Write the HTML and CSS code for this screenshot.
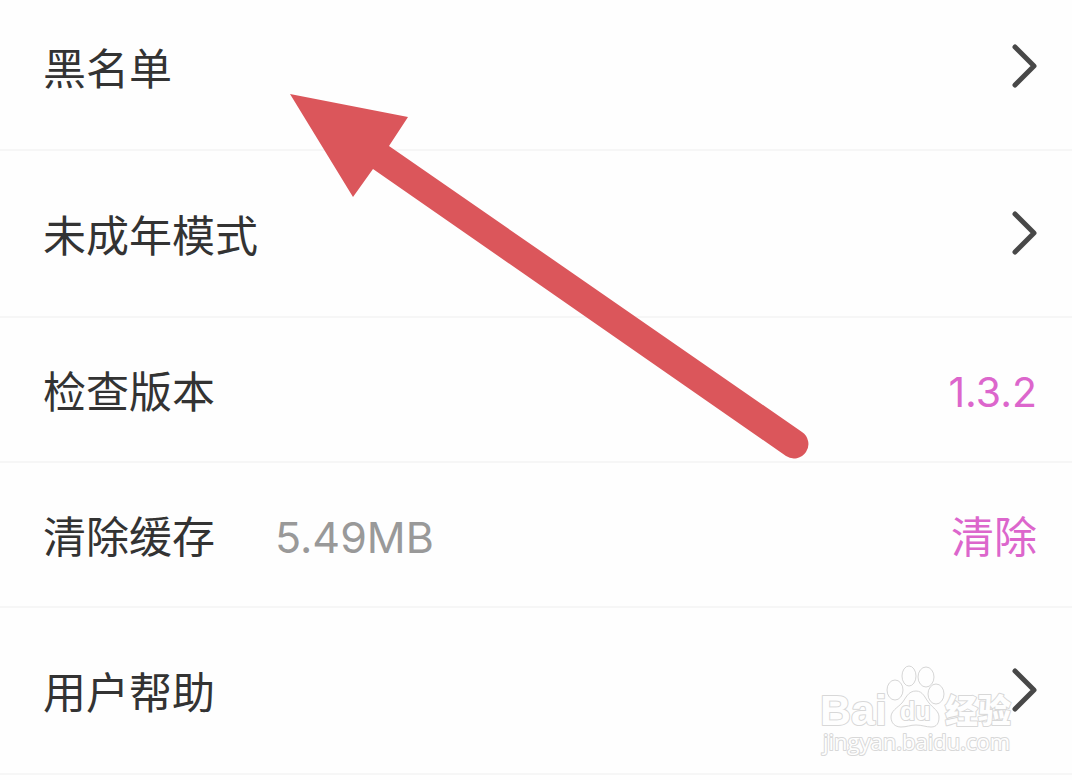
FILE: index.html
```html
<!DOCTYPE html>
<html lang="zh-CN">
<head>
<meta charset="utf-8">
<meta name="viewport" content="width=device-width, initial-scale=1">
<title>设置</title>
<link rel="stylesheet" href="styles.css">
</head>
<body>
<main class="settings">
  <a class="row row-tall" href="#blacklist">
    <span class="label">黑名单</span>
    <svg class="chevron" viewBox="0 0 26 44" aria-hidden="true"><path d="M4 3 23 22 4 41"/></svg>
  </a>
  <a class="row row-tall" href="#minor">
    <span class="label">未成年模式</span>
    <svg class="chevron" viewBox="0 0 26 44" aria-hidden="true"><path d="M4 3 23 22 4 41"/></svg>
  </a>
  <div class="row">
    <span class="label">检查版本</span>
    <span class="version">1.3.2</span>
  </div>
  <div class="row">
    <span class="label">清除缓存</span>
    <span class="size">5.49MB</span>
    <button class="clear" type="button">清除</button>
  </div>
  <div class="row row-tall">
    <svg class="watermark" viewBox="0 0 200 96" role="img" aria-label="百度经验">
      <g class="wm-shape">
        <ellipse cx="77" cy="27" rx="8" ry="10"/>
        <ellipse cx="91" cy="13" rx="7" ry="10"/>
        <ellipse cx="108" cy="14" rx="8" ry="10"/>
        <ellipse cx="118" cy="31" rx="8" ry="10"/>
        <path d="M98 28C90 28 88 35 84 40C79 45 73 48 73 54C73 60 77 64 83 64C89 64 92 62 98 62C104 62 108 64 113 64C119 64 121 60 121 54C121 48 115 45 111 40C107 35 105 28 98 28Z"/>
      </g>
      <text class="wm-text wm-brand" x="2" y="62">Bai</text>
      <text class="wm-text wm-du" x="82" y="57">du</text>
      <text class="wm-text wm-cn" x="127" y="60">经验</text>
      <text class="wm-text wm-url" x="5" y="87">jingyan.baidu.com</text>
    </svg>
    <a class="row-link" href="#help">
      <span class="label">用户帮助</span>
      <svg class="chevron" viewBox="0 0 26 44" aria-hidden="true"><path d="M4 3 23 22 4 41"/></svg>
    </a>
  </div>
  <svg class="pointer" viewBox="0 0 520 366" aria-hidden="true">
    <path d="M0 0 118 23 99 52 512 338A14 14 0 0 1 496 362L83 75 63 103Z"/>
  </svg>
</main>
</body>
</html>
```

FILE: styles.css
```css
* {
  box-sizing: border-box;
}

body {
  margin: 0;
  background: #fefefe;
  color: #333;
  font-family: Inter, "Noto Sans CJK SC", sans-serif;
  font-size: 43px;
  line-height: 64px;
  overflow-x: hidden;
}

/* The list is scrolled slightly past its first row's top edge. */
.settings {
  position: relative;
  margin-top: -16px;
}

.row {
  position: relative;
  display: flex;
  align-items: center;
  padding: 42px 35px 37px 43px;
  border-bottom: 2px solid #f6f6f6;
  color: inherit;
  text-decoration: none;
}

.row-tall {
  padding-top: 53px;
  padding-bottom: 48px;
}

.row-link {
  position: relative;
  display: flex;
  flex: 1;
  align-items: center;
  color: inherit;
  text-decoration: none;
}

.chevron {
  width: 26px;
  height: 44px;
  margin: 0 0 6px auto;
  fill: none;
  stroke: #484848;
  stroke-width: 5;
  stroke-linecap: round;
  stroke-linejoin: round;
}

.version {
  margin-left: auto;
  color: #dc66cc;
  font-size: 41px;
}

.size {
  margin-left: 60px;
  color: #999;
}

.clear {
  margin-left: auto;
  padding: 0;
  border: 0;
  background: none;
  color: #dc66cc;
  font: inherit;
}

.pointer {
  position: absolute;
  top: 110px;
  left: 290px;
  width: 520px;
  height: 366px;
  fill: #db565b;
  pointer-events: none;
}

.watermark {
  position: absolute;
  right: 54px;
  bottom: 14px;
  width: 200px;
  height: 96px;
}

.wm-shape {
  fill: #fefefe;
  stroke: #d6d6d6;
  stroke-width: 1;
}

.wm-text {
  fill: #fefefe;
  stroke: #d8d8d8;
  stroke-width: 2;
  stroke-linejoin: round;
  paint-order: stroke;
}

.wm-brand {
  font: bold 43px "Liberation Sans", sans-serif;
}

.wm-du {
  font: bold 25px "Liberation Sans", sans-serif;
}

.wm-cn {
  font: 900 33px "Noto Sans CJK SC", sans-serif;
}

.wm-url {
  font: 500 22px "Open Sans", sans-serif;
}
```
